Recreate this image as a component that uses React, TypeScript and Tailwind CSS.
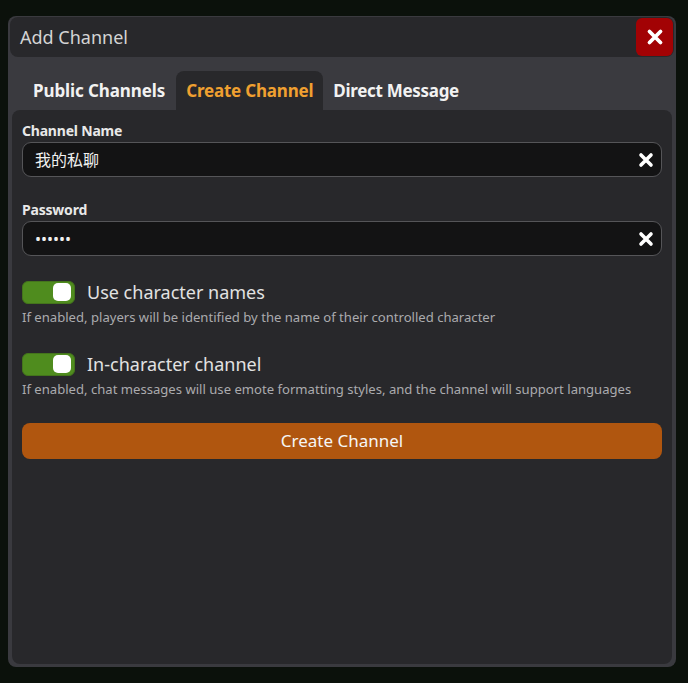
import React from 'react';

const font = { fontFamily: '"Noto Sans", "Noto Sans CJK SC", sans-serif' };

const ClearIcon = () => (
  <svg width="16" height="16" viewBox="0 0 16 16" className="shrink-0">
    <path d="M3 3 L13 13 M13 3 L3 13" stroke="#ffffff" strokeWidth="3.6" strokeLinecap="round" />
  </svg>
);

const TextField = ({ label, value, mt }: { label: string; value: string; mt: string }) => (
  <div className={`flex flex-col ${mt}`}>
    <label className="text-[14px] font-bold text-[#e8e8e8] leading-[20px] tracking-[-0.2px]">{label}</label>
    <div className="mt-[1px] h-[35px] rounded-[9px] border border-[#555558] bg-[#131314] flex items-center pl-[12px] pr-[7px]">
      <span className="flex-1 text-[16px] text-[#f0f0f0] leading-none">{value}</span>
      <ClearIcon />
    </div>
  </div>
);

const Toggle = ({ title, desc, mt }: { title: string; desc: string; mt: string }) => (
  <div className={`flex flex-col ${mt}`}>
    <div className="flex items-center gap-[12px]">
      <div className="w-[53px] h-[23px] rounded-[6px] bg-[#4f8c1e] border border-[#44741c] flex items-center justify-end pr-[3px]">
        <div className="w-[18px] h-[18px] rounded-[5px] bg-white" />
      </div>
      <span className="text-[18px] text-[#e2e2e2] leading-[24px]">{title}</span>
    </div>
    <p className="mt-[4px] text-[13.1px] text-[#ababae] leading-[18px]">{desc}</p>
  </div>
);

export default function App() {
  return (
    <div className="w-[688px] h-[683px] bg-[#0b110b] pt-[16px] pl-[8px]" style={font}>
      <div className="w-[668px] h-[651px] rounded-[8px] bg-[#3a3a3f] flex flex-col px-[2px] pb-[3px] pt-[1px]">
        {/* Title bar */}
        <div className="h-[40px] rounded-[8px] bg-[#28282b] flex items-center justify-between pl-[10px] pr-[1px]">
          <span className="text-[18px] text-[#d4d4d4] mt-[1px]">Add Channel</span>
          <button className="w-[37px] h-[38px] rounded-[6px] bg-[#a20204] flex items-center justify-center">
            <svg width="18" height="18" viewBox="0 0 18 18">
              <path d="M3.5 3.5 L14.5 14.5 M14.5 3.5 L3.5 14.5" stroke="#ffffff" strokeWidth="3.8" strokeLinecap="round" />
            </svg>
          </button>
        </div>

        {/* Tabs */}
        <div className="flex items-end h-[53px] pl-[12px] pt-[14px]">
          <div className="h-[39px] px-[11px] flex items-center text-[17px] font-bold text-[#f2f2f2] tracking-[-0.1px]">Public Channels</div>
          <div className="h-[39px] px-[10px] flex items-center rounded-t-[8px] bg-[#28282b] text-[17px] font-bold text-[#f0a030] tracking-[-0.2px]">Create Channel</div>
          <div className="h-[39px] px-[10px] flex items-center text-[17px] font-bold text-[#f2f2f2] tracking-[-0.3px]">Direct Message</div>
        </div>

        {/* Content */}
        <div className="flex-1 mx-[2px] rounded-[8px] bg-[#28282b] px-[10px] pt-[11px] flex flex-col">
          <TextField label="Channel Name" value="我的私聊" mt="mt-0" />
          <TextField label="Password" value="••••••" mt="mt-[23px]" />
          <Toggle
            title="Use character names"
            desc="If enabled, players will be identified by the name of their controlled character"
            mt="mt-[24px]"
          />
          <Toggle
            title="In-character channel"
            desc="If enabled, chat messages will use emote formatting styles, and the channel will support languages"
            mt="mt-[26px]"
          />
          <button className="mt-[25px] h-[36px] rounded-[8px] bg-[#b0560f] text-[17px] text-[#f6f6f6] flex items-center justify-center">
            Create Channel
          </button>
        </div>
      </div>
    </div>
  );
}
